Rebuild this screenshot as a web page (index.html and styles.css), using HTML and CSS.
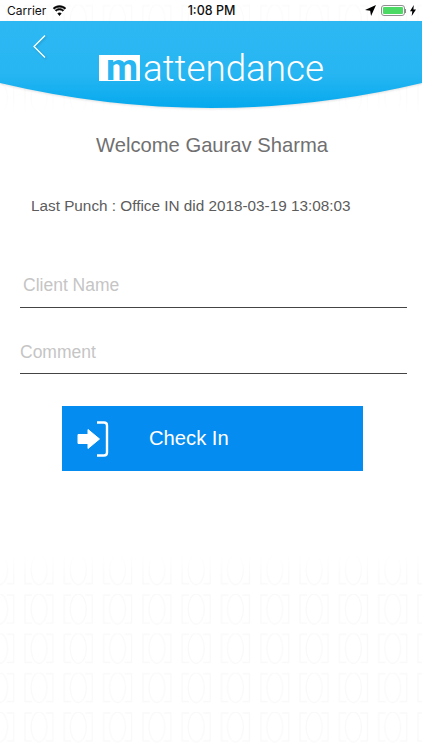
FILE: index.html
```html
<!DOCTYPE html>
<html lang="en">
<head>
  <meta charset="UTF-8" />
  <meta name="viewport" content="width=device-width, initial-scale=1.0"/>
  <title>mAttendance</title>
  <link rel="stylesheet" href="styles.css">
</head>
<body>
  <!-- faint watermark tiles, only showing at the top strip and the bottom of the screen -->
  <svg class="watermark" width="422" height="750">
    <defs>
      <pattern id="tile" x="24" y="4.6" width="39.3" height="39.3" patternUnits="userSpaceOnUse">
        <path d="M8 1H1V29H8M22 1H29V29H22" fill="none" stroke="#000" stroke-width="1.300"/>
        <ellipse cx="15" cy="15" rx="8" ry="15" fill="none" stroke="#000" stroke-width="1.300"/>
      </pattern>
      <linearGradient id="fade" x1="0" y1="0" x2="0" y2="1">
        <stop offset="0" stop-color="#fff" stop-opacity="0.7"/>
        <stop offset="0.13" stop-color="#fff" stop-opacity="0.7"/>
        <stop offset="0.155" stop-color="#fff" stop-opacity="0"/>
        <stop offset="0.735" stop-color="#fff" stop-opacity="0"/>
        <stop offset="0.77" stop-color="#fff" stop-opacity="1"/>
        <stop offset="1" stop-color="#fff" stop-opacity="1"/>
      </linearGradient>
      <mask id="fadeMask"><rect width="422" height="750" fill="url(#fade)"/></mask>
    </defs>
    <rect width="422" height="750" fill="url(#tile)" mask="url(#fadeMask)" opacity="0.022"/>
  </svg>

  <div class="status-bar">
    <div class="status-left">
      <span>Carrier</span>
      <svg class="wifi" viewBox="0 0 16 12"><path d="M8 2.400c2.300 0 4.300.9 5.800 2.300l1.200-1.300C13.200 1.700 10.700.6 8 .6S2.800 1.700 1 3.400l1.200 1.300C3.700 3.300 5.700 2.400 8 2.400z"/><path d="M8 5.500c1.400 0 2.600.5 3.600 1.400l1.200-1.300C11.500 4.400 9.800 3.700 8 3.700s-3.500.7-4.800 1.900l1.200 1.300c1-.9 2.200-1.400 3.600-1.400z"/><path d="M8 8.500c-.8 0-1.500.3-2 .8l2 2.300 2-2.300c-.5-.5-1.200-.8-2-.8z"/></svg>
    </div>
    <div class="status-time">1:08 PM</div>
    <div class="status-right">
      <svg class="arrow" viewBox="0 0 10 10"><path d="M10 0L0 4.500l4.700.8.800 4.700z"/></svg>
      <div class="battery"><div class="battery-fill"></div></div>
      <div class="battery-cap"></div>
      <svg class="bolt" viewBox="0 0 6 11"><path d="M3.800 0L0 6.200h2.300L1.700 11 6 4.400H3.400z"/></svg>
    </div>
  </div>

  <header class="app-header">
    <svg class="header-curve" viewBox="0 0 422 90" preserveAspectRatio="none">
      <defs>
        <linearGradient id="headerFill" x1="0" y1="0" x2="0" y2="1">
          <stop offset="0" stop-color="#2db8f3"/>
          <stop offset="0.6" stop-color="#27b6f2"/>
          <stop offset="1" stop-color="#05a9ee"/>
        </linearGradient>
      </defs>
      <path d="M0 0H422V62Q211 112 0 62Z" fill="url(#headerFill)"/>
    </svg>
    <svg class="back" viewBox="0 0 14 24"><path d="M13 1.500L2 12.500 13 23.500" fill="none" stroke="#fff" stroke-width="1.300"/></svg>
    <div class="logo">
      <span class="logo-m">m</span><span class="logo-text">attendance</span>
    </div>
  </header>

  <main class="content">
    <h2 class="welcome">Welcome Gaurav Sharma</h2>
    <p class="last-punch">Last Punch : Office IN did 2018-03-19 13:08:03</p>
    <input class="field field-client" type="text" placeholder="Client Name">
    <input class="field field-comment" type="text" placeholder="Comment">
    <button class="check-btn">
      <svg class="check-icon" viewBox="0 0 32 36">
        <path d="M1 13.500H11V8.500L22.500 18 11 27.500V22.500H1Z" fill="#fff" stroke="#fff" stroke-linejoin="round" stroke-width="1"/>
        <path d="M20 1.500H27Q30 1.500 30 4.500V31.500Q30 34.500 27 34.500H20" fill="none" stroke="#fff" stroke-width="2.400"/>
      </svg>
      <span>Check In</span>
    </button>
  </main>
</body>
</html>
```

FILE: styles.css
```css
* {
  margin: 0;
  padding: 0;
  box-sizing: border-box;
}

body {
  width: 422px;
  height: 750px;
  overflow: hidden;
  position: relative;
  background: #fff;
  font-family: "Liberation Sans", Arial, sans-serif;
}

.watermark {
  position: absolute;
  top: 0;
  left: 0;
}

.status-bar {
  position: relative;
  height: 21px;
  display: flex;
  align-items: center;
  justify-content: space-between;
  padding: 0 6px 0 7px;
  font-family: Inter, sans-serif;
  font-size: 12px;
  color: #111;
}

.status-left {
  width: 140px;
  display: flex;
  align-items: center;
  gap: 6px;
}

.wifi {
  width: 15px;
  height: 11px;
  fill: #000;
  stroke: #000;
  stroke-width: 0.5;
}

.status-time {
  font-weight: 500;
  font-size: 12.500px;
}

.status-right {
  width: 140px;
  display: flex;
  align-items: center;
  justify-content: flex-end;
}

.arrow {
  width: 11px;
  height: 11px;
  fill: #000;
  margin-right: 5px;
}

.battery {
  width: 24px;
  height: 11px;
  border: 1px solid #8f8f8f;
  border-radius: 3px;
  padding: 1px;
}

.battery-fill {
  height: 100%;
  background: #4cd964;
  border-radius: 1px;
}

.battery-cap {
  width: 1px;
  height: 4px;
  background: #8f8f8f;
  margin-right: 4px;
}

.bolt {
  width: 6px;
  height: 11px;
  fill: #000;
}

.app-header {
  position: relative;
  height: 90px;
}

.header-curve {
  position: absolute;
  top: 0;
  left: 0;
  width: 422px;
  height: 90px;
  filter: drop-shadow(0 1px 1px rgba(0, 0, 0, 0.12));
}

.back {
  position: absolute;
  top: 13px;
  left: 32px;
  width: 14px;
  height: 24px;
  filter: drop-shadow(1px 1px 1px rgba(0, 0, 0, 0.2));
}

.logo {
  position: absolute;
  top: 28px;
  left: 99px;
  display: flex;
  align-items: flex-end;
}

.logo-m {
  width: 41px;
  height: 26px;
  margin: 6px 3px 0 0;
  padding-left: 7px;
  background: #fff;
  color: #27b6f2;
  font-family: Roboto, sans-serif;
  font-size: 37px;
  font-weight: 700;
  line-height: 26px;
}

.logo-text {
  font-family: Roboto, sans-serif;
  font-size: 36.800px;
  font-weight: 300;
  line-height: 38px;
  color: #fff;
  margin-bottom: -7px;
}

.content {
  position: relative;
  display: flex;
  flex-direction: column;
}

.welcome {
  margin-top: 22px;
  padding-left: 2px;
  font-size: 20.200px;
  line-height: 24px;
  font-weight: 400;
  color: #707070;
  text-align: center;
}

.last-punch {
  margin: 40px 0 0 31px;
  font-size: 15.300px;
  line-height: 18px;
  color: #5c5c5c;
}

.field {
  display: block;
  width: 387px;
  margin-left: 20px;
  border: none;
  border-bottom: 1px solid #444;
  border-radius: 0;
  background: transparent;
  outline: none;
  font-family: inherit;
  font-size: 17.500px;
  color: #333;
}

.field::placeholder {
  color: #c5c5c5;
  opacity: 1;
}

.field-client {
  height: 44px;
  margin-top: 49px;
  padding: 0 0 0 3px;
}

.field-comment {
  height: 44px;
  margin-top: 22px;
  padding-top: 2px;
}

.check-btn {
  width: 301px;
  height: 65px;
  margin: 32px 0 0 62px;
  display: flex;
  align-items: center;
  border: none;
  background: #058cf0;
  color: #fff;
  font-family: inherit;
  font-size: 20.200px;
}

.check-icon {
  width: 32px;
  height: 36px;
  margin-left: 15px;
}

.check-btn span {
  margin-left: 40px;
}
```
